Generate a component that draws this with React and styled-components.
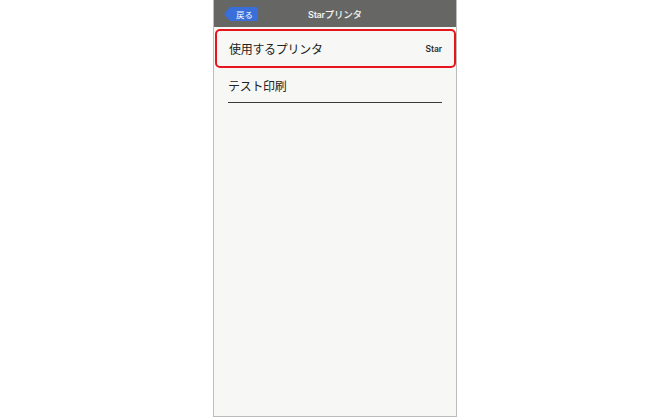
import React from 'react';
import styled, { createGlobalStyle } from 'styled-components';

const GlobalStyle = createGlobalStyle`
  html, body {
    margin: 0;
    padding: 0;
    background: #ffffff;
  }
  body {
    font-family: "Roboto", "Noto Sans CJK JP", sans-serif;
  }
`;

// phone screen
const Screen = styled.div`
  box-sizing: border-box;
  width: 244px;
  height: 417px;
  margin: 0 auto;
  border: 1px solid #bcbcbc;
  border-top: none;
  background: #f7f8f5;
  display: flex;
  flex-direction: column;
`;

const Header = styled.header`
  position: relative;
  height: 27px;
  flex-shrink: 0;
  background: #666764;
  display: flex;
  align-items: center;
  justify-content: center;
`;

const Title = styled.h1`
  margin: 0;
  font-size: 9.5px;
  font-weight: 500;
  color: #f4f4f4;
  letter-spacing: -0.2px;
`;

const BackButton = styled.button`
  position: absolute;
  left: 16px;
  top: 7px;
  height: 14px;
  width: 28px;
  padding: 0 0 0 1px;
  border: none;
  border-radius: 0 2px 2px 0;
  background: #3a6ed8;
  color: #ffffff;
  font-family: "Noto Sans CJK JP", sans-serif;
  font-size: 8.5px;
  line-height: 14px;
  &::before {
    content: '';
    position: absolute;
    left: -6px;
    top: 0;
    border-style: solid;
    border-width: 7px 6px 7px 0;
    border-color: transparent #3a6ed8 transparent transparent;
  }
`;

const List = styled.div`
  display: flex;
  flex-direction: column;
  padding-top: 2px;
`;

const Row = styled.div`
  box-sizing: border-box;
  height: ${p => p.$h}px;
  padding: 0 ${p => (p.$marked ? 12 : 14)}px;
  border: ${p => (p.$marked ? '2px solid #e8141c' : 'none')};
  border-radius: ${p => (p.$marked ? '5px' : '0')};
  margin: 0 ${p => (p.$marked ? '0 0 1px' : '0')};
`;

const RowInner = styled.div`
  height: 100%;
  display: flex;
  align-items: center;
  justify-content: space-between;
  border-bottom: ${p => (p.$line ? '1px solid #3a3a3a' : 'none')};
  box-sizing: border-box;
`;

const Label = styled.span`
  font-family: "Noto Sans CJK JP", sans-serif;
  font-size: 12px;
  color: #222222;
  letter-spacing: -0.3px;
`;

const Value = styled.span`
  font-family: "Roboto", sans-serif;
  font-size: 9px;
  font-weight: 500;
  color: #2a2a2a;
`;

export default function App() {
  return (
    <>
      <GlobalStyle />
      <Screen>
        <Header>
          <BackButton>戻る</BackButton>
          <Title>Starプリンタ</Title>
        </Header>
        <List>
          <Row $marked $h={39}>
            <RowInner>
              <Label>使用するプリンタ</Label>
              <Value>Star</Value>
            </RowInner>
          </Row>
          <Row $h={35}>
            <RowInner $line>
              <Label>テスト印刷</Label>
            </RowInner>
          </Row>
        </List>
      </Screen>
    </>
  );
}
